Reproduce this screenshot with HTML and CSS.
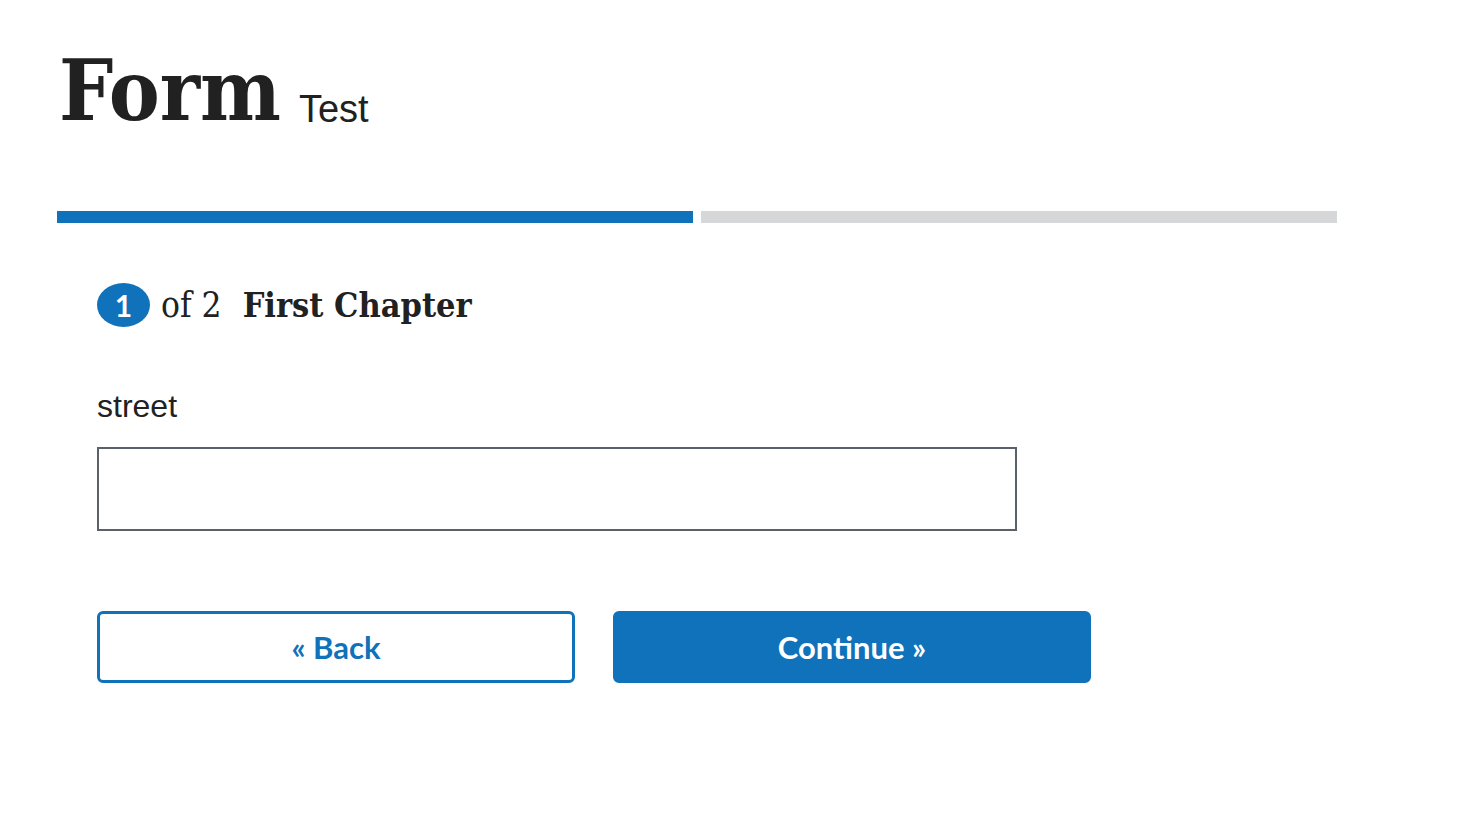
FILE: index.html
```html
<!DOCTYPE html>
<html lang="en">
<head>
<meta charset="utf-8">
<title>Form Test</title>
<link rel="stylesheet" href="styles.css">
</head>
<body>
<div class="page">
  <header class="title-row">
    <h1 class="title">Form</h1>
    <span class="subtitle">Test</span>
  </header>
  <div class="progress">
    <div class="segment active"></div>
    <div class="segment"></div>
  </div>
  <div class="content">
    <h2 class="step-heading">
      <span class="step-num">1</span>
      <span class="step-of">of 2</span>
      <span class="step-name">First Chapter</span>
    </h2>
    <form class="form">
      <label class="field-label" for="street">street</label>
      <input class="field-input" id="street" type="text">
      <div class="actions">
        <button type="button" class="btn btn-outline">« Back</button>
        <button type="button" class="btn btn-primary">Continue »</button>
      </div>
    </form>
  </div>
</div>
</body>
</html>
```

FILE: styles.css
```css
html, body {
  margin: 0;
  padding: 0;
  background: #ffffff;
  color: #212121;
}

.page {
  padding: 40px 0 0 57px;
  width: 1280px;
}

.title-row {
  display: flex;
  align-items: baseline;
  gap: 18px;
  padding-left: 2px;
}

.title {
  margin: 0;
  font-family: "DejaVu Serif", serif;
  font-stretch: condensed;
  font-weight: 700;
  font-size: 85px;
  line-height: 100px;
  color: #212121;
}

.subtitle {
  position: relative;
  top: 2px;
  font-family: "Liberation Sans", Arial, sans-serif;
  font-size: 38px;
  color: #212121;
}

.progress {
  display: flex;
  gap: 8px;
  margin-top: 71px;
}

.segment {
  flex: 1;
  height: 12px;
  background: #d6d7d9;
}

.segment.active {
  background: #1072ba;
}

.content {
  padding-left: 40px;
}

.step-heading {
  display: flex;
  align-items: center;
  margin: 60px 0 0 0;
  font-family: "DejaVu Serif", serif;
  font-stretch: condensed;
  font-weight: 400;
  font-size: 35px;
  line-height: 44px;
  color: #212121;
}

.step-num {
  display: flex;
  align-items: center;
  justify-content: center;
  width: 53px;
  height: 44px;
  border-radius: 50%;
  background: #1072ba;
  color: #ffffff;
  font-family: "Lato", sans-serif;
  font-weight: 700;
  font-size: 30px;
}

.step-of {
  margin-left: 11px;
}

.step-name {
  margin-left: 21px;
  font-weight: 700;
  font-size: 34px;
}

.form {
  display: flex;
  flex-direction: column;
  align-items: flex-start;
}

.field-label {
  margin-top: 61px;
  font-family: "Liberation Sans", Arial, sans-serif;
  font-size: 32px;
  line-height: 36px;
  color: #212121;
}

.field-input {
  box-sizing: border-box;
  margin-top: 23px;
  width: 920px;
  height: 84px;
  border: 2px solid #5b616b;
  border-radius: 0;
  padding: 0 16px;
  font-size: 28px;
  background: #ffffff;
}

.actions {
  display: flex;
  gap: 38px;
  margin-top: 80px;
}

.btn {
  box-sizing: border-box;
  width: 478px;
  height: 72px;
  border-radius: 6px;
  font-family: "Lato", sans-serif;
  font-weight: 700;
  font-size: 31px;
  cursor: pointer;
}

.btn-outline {
  background: #ffffff;
  color: #1072ba;
  border: 3px solid #1072ba;
}

.btn-primary {
  background: #1072ba;
  color: #ffffff;
  border: 3px solid #1072ba;
}
```
